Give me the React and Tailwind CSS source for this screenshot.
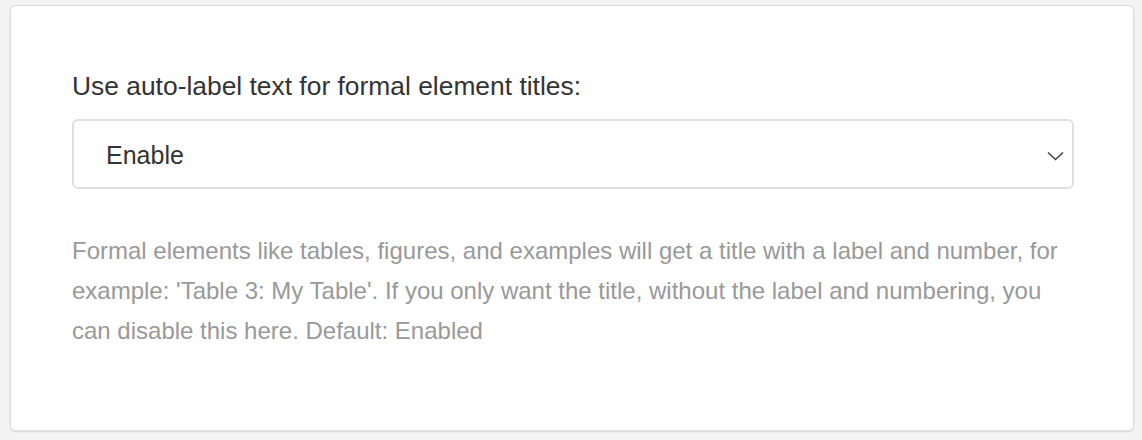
const App = () => {
    return (
        <div className="min-h-[440px] bg-[#f4f4f4] pt-[5px] pl-[10px] pr-[8px] pb-[9px]" style={{ fontFamily: '"Liberation Sans", Arial, sans-serif' }}>
            <div className="h-[426px] bg-white border border-[#dcdcdc] rounded-[5px] shadow-[0_1px_2px_rgba(0,0,0,0.12)] pl-[61px] pr-[60px] pt-[64px]">
                <label className="block text-[26.4px] leading-[32px] text-[#333]">
                    Use auto-label text for formal element titles:
                </label>
                <div className="relative mt-[17px] h-[70px] w-[1002px] border-2 border-[#e0e0e0] rounded-[6px] flex items-center pl-[32px] pt-[3px]">
                    <span className="text-[25px] text-[#333]">Enable</span>
                    <svg className="absolute right-[8px] top-[30px]" width="17" height="10" viewBox="0 0 17 10" fill="none">
                        <path d="M1 1.5 L8.5 8.5 L16 1.5" stroke="#444" strokeWidth="1.6" />
                    </svg>
                </div>
                <p className="mt-[42px] w-[1002px] text-[24px] leading-[40px] text-[#999]">
                    Formal elements like tables, figures, and examples will get a title with a label and number, for example: 'Table 3: My Table'. If you only want the title, without the label and numbering, you can disable this here. Default: Enabled
                </p>
            </div>
        </div>
    );
};

export default App;
